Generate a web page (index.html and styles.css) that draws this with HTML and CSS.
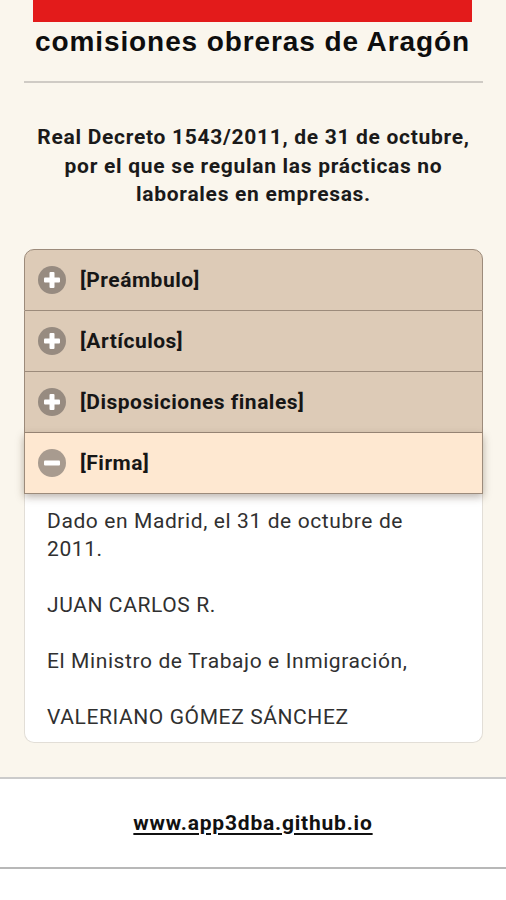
FILE: index.html
```html
<!DOCTYPE html>
<html lang="es">
<head>
<meta charset="utf-8">
<title>Real Decreto 1543/2011</title>
<link rel="stylesheet" href="styles.css">
</head>
<body>
<div class="page">
  <header class="brand">
    <div class="brand-bar"></div>
    <div class="brand-name">comisiones obreras de Aragón</div>
  </header>
  <hr class="rule">
  <h1 class="title">Real Decreto 1543/2011, de 31 de octubre, por el que se regulan las prácticas no laborales en empresas.</h1>

  <div class="accordion">
    <div class="acc-head">
      <span class="acc-icon"><svg viewBox="0 0 28 28" width="28" height="28"><circle cx="14" cy="14" r="14" fill="#978b80"/><rect x="6" y="11.5" width="16" height="5" rx="1" fill="#fff"/><rect x="11.5" y="6" width="5" height="16" rx="1" fill="#fff"/></svg></span>
      <span class="acc-label">[Preámbulo]</span>
    </div>
    <div class="acc-head">
      <span class="acc-icon"><svg viewBox="0 0 28 28" width="28" height="28"><circle cx="14" cy="14" r="14" fill="#978b80"/><rect x="6" y="11.5" width="16" height="5" rx="1" fill="#fff"/><rect x="11.5" y="6" width="5" height="16" rx="1" fill="#fff"/></svg></span>
      <span class="acc-label">[Artículos]</span>
    </div>
    <div class="acc-head">
      <span class="acc-icon"><svg viewBox="0 0 28 28" width="28" height="28"><circle cx="14" cy="14" r="14" fill="#978b80"/><rect x="6" y="11.5" width="16" height="5" rx="1" fill="#fff"/><rect x="11.5" y="6" width="5" height="16" rx="1" fill="#fff"/></svg></span>
      <span class="acc-label">[Disposiciones finales]</span>
    </div>
    <div class="acc-head acc-open">
      <span class="acc-icon"><svg viewBox="0 0 28 28" width="28" height="28"><circle cx="14" cy="14" r="14" fill="#a89b8f"/><rect x="6" y="11.5" width="16" height="5" rx="1" fill="#fff"/></svg></span>
      <span class="acc-label">[Firma]</span>
    </div>
    <div class="acc-body">
      <p>Dado en Madrid, el 31 de octubre de 2011.</p>
      <p>JUAN CARLOS R.</p>
      <p>El Ministro de Trabajo e Inmigración,</p>
      <p>VALERIANO GÓMEZ SÁNCHEZ</p>
    </div>
  </div>
</div>
<footer class="footer">
  <a class="footer-link" href="#">www.app3dba.github.io</a>
</footer>
<div class="after"></div>
</body>
</html>
```

FILE: styles.css
```css
html, body {
  margin: 0;
  padding: 0;
}
html {
  background: #fff;
}
body {
  background: #faf6ed;
  font-family: Roboto, "Liberation Sans", sans-serif;
  color: #111;
}
.page {
  padding: 0 23px 34px 24px;
}
.brand {
  width: 439px;
  margin: 0 0 0 9px;
}
.brand-bar {
  height: 22px;
  background: #e31b1b;
}
.brand-name {
  font-family: "Liberation Sans", Arial, sans-serif;
  font-weight: bold;
  font-size: 28px;
  letter-spacing: 0.9px;
  line-height: 40px;
  text-align: center;
  color: #0e0e0e;
  white-space: nowrap;
}
.rule {
  margin: 19px 0 0 0;
  border: 0;
  height: 2px;
  background: #cfcbc5;
}
.title {
  margin: 40px 0 0 0;
  font-size: 21px;
  font-weight: 700;
  letter-spacing: 0.7px;
  line-height: 28.5px;
  text-align: center;
  color: #1a1a1a;
}
.accordion {
  margin-top: 40px;
}
.acc-head {
  height: 60px;
  display: flex;
  align-items: center;
  gap: 14px;
  padding-left: 13px;
  background: #ddcbb7;
  border: 1px solid #9c8b7b;
  border-top: 0;
}
.acc-head:first-child {
  border-top: 1px solid #9c8b7b;
  border-radius: 10px 10px 0 0;
}
.acc-icon {
  display: flex;
  width: 28px;
  height: 28px;
}
.acc-label {
  font-size: 21px;
  font-weight: 700;
  letter-spacing: 0.5px;
  color: #161616;
}
.acc-open {
  background: #fee8d1;
  box-shadow: 0 3px 8px rgba(60, 40, 20, 0.35);
  position: relative;
}
.acc-body {
  padding: 13px 23px 10px 22px;
  border: 1px solid #e2ded7;
  border-top: 0;
  border-radius: 0 0 10px 10px;
  background: #fff;
}
.acc-body p {
  margin: 0 0 27.5px 0;
  font-size: 21px;
  letter-spacing: 0.6px;
  line-height: 28.5px;
  color: #303030;
}
.acc-body p:last-child {
  margin-bottom: 0;
}
.footer {
  background: #fff;
  border-top: 2px solid #cbcbcb;
  border-bottom: 2px solid #b8b8b8;
  height: 88px;
  display: flex;
  align-items: center;
  justify-content: center;
}
.footer-link {
  font-size: 21px;
  font-weight: 700;
  letter-spacing: 0.8px;
  color: #111;
  text-decoration: underline;
  text-underline-offset: 3px;
}
.after {
  background: #fff;
  height: 28px;
}
```
